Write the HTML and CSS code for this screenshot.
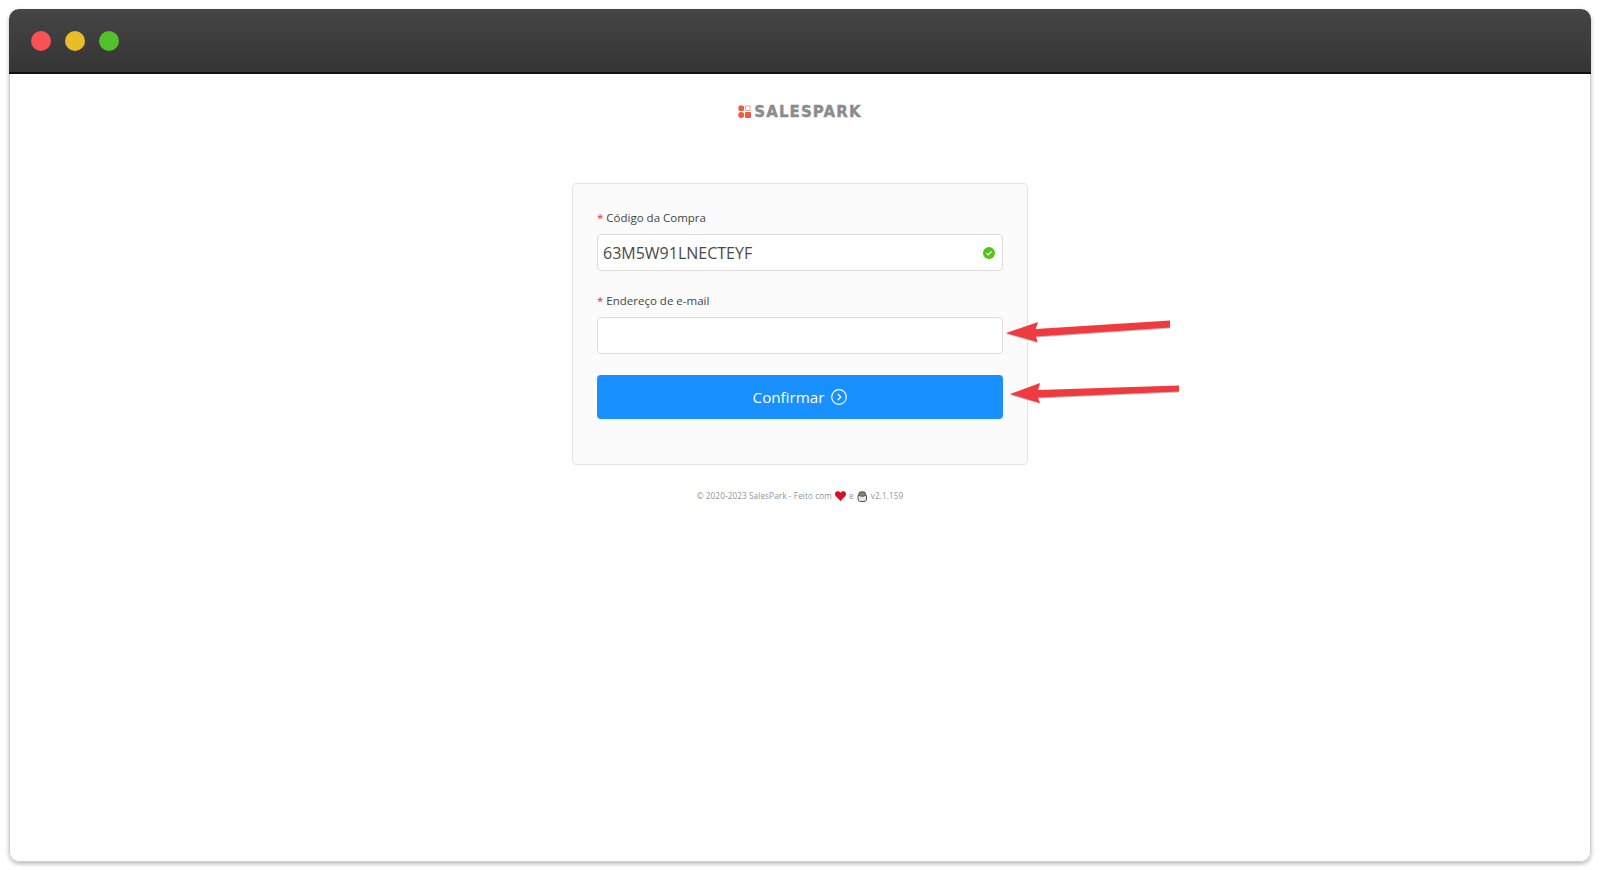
FILE: index.html
```html
<!DOCTYPE html>
<html lang="pt">
<head>
<meta charset="utf-8">
<title>SalesPark</title>
<link rel="stylesheet" href="styles.css">
</head>
<body>
<div class="window">
  <header class="titlebar">
    <span class="dot dot-red"></span>
    <span class="dot dot-yellow"></span>
    <span class="dot dot-green"></span>
  </header>
  <main class="content">
    <div class="logo">
      <svg class="logo-mark" width="13" height="13" viewBox="0 0 13 13">
        <rect x="0.5" y="0.5" width="5.5" height="5.5" rx="1.5" fill="#ee5a3c"/>
        <rect x="7.5" y="1" width="4.5" height="4.5" fill="none" stroke="#f0a898" stroke-width="1"/>
        <circle cx="3.2" cy="10" r="3" fill="#ee5a3c"/>
        <rect x="7" y="7" width="6" height="6" rx="1" fill="#ee5a3c"/>
      </svg>
      <span class="logo-text">SALESPARK</span>
    </div>
    <form class="card">
      <div class="field">
        <label class="label"><span class="req">*</span>Código da Compra</label>
        <div class="input has-value">
          <span>63M5W91LNECTEYF</span>
          <svg class="check" width="12" height="12" viewBox="0 0 12 12">
            <circle cx="6" cy="6" r="6" fill="#52c41a"/>
            <path d="M3.5 6.2 5.2 7.9 8.6 4.4" fill="none" stroke="#fff" stroke-width="1.3"/>
          </svg>
        </div>
      </div>
      <div class="field">
        <label class="label"><span class="req">*</span>Endereço de e-mail</label>
        <div class="input"></div>
      </div>
      <button class="submit" type="button">
        <span>Confirmar</span>
        <svg width="16" height="16" viewBox="0 0 16 16">
          <circle cx="8" cy="8" r="7.3" fill="none" stroke="#fff" stroke-width="1.2"/>
          <path d="M6.8 5 9.8 8 6.8 11" fill="none" stroke="#fff" stroke-width="1.2"/>
        </svg>
      </button>
    </form>
    <footer class="foot">
      <span>© 2020-2023 SalesPark - Feito com</span>
      <svg width="11" height="10" viewBox="0 0 11 10"><path d="M5.500 10 .6 5C-.6 3.400 0 .8 2.200.3 3.600 0 4.800.6 5.500 1.800 6.200.6 7.400 0 8.800.3 11 .8 11.600 3.400 10.400 5Z" fill="#d5121f"/></svg>
      <span>e</span>
      <svg width="11" height="11" viewBox="0 0 11 11"><path d="M1 4.500h8.500V8a2.500 2.500 0 0 1-2.500 2.500H3.500A2.500 2.500 0 0 1 1 8Z" fill="#e9e9e4" stroke="#555" stroke-width="1"/><ellipse cx="5.200" cy="3" rx="3.600" ry="2.400" fill="#8b7d6c" stroke="#555" stroke-width=".8"/></svg>
      <span>v2.1.159</span>
    </footer>
  </main>
</div>
<svg class="arrows" width="1600" height="870" viewBox="0 0 1600 870">
  <path d="M1006 333 1038 322 1035.500 329 1170 320.500 1170 327.500 1036 336.500 1037.500 342Z" fill="#ef3b3f"/>
  <path d="M1010 394 1040 383 1038 390 1179 385.500 1179 391.500 1038 397.500 1040 403Z" fill="#ef3b3f"/>
</svg>
</body>
</html>
```
FILE: styles.css
```css
* {
  box-sizing: border-box;
}

html,
body {
  margin: 0;
  height: 870px;
  overflow: hidden;
  background: #fff;
}

body {
  padding: 9px 9px 8px;
  font-family: "Open Sans", "Noto Sans", sans-serif;
  color: #444;
}

.window {
  height: 100%;
  display: flex;
  flex-direction: column;
  border-radius: 10px;
  overflow: hidden;
  box-shadow: 0 2px 4px rgba(0, 0, 0, 0.28);
}

.titlebar {
  flex: none;
  height: 65px;
  padding-left: 22px;
  display: flex;
  align-items: center;
  gap: 14px;
  background: linear-gradient(#454545, #353535);
  border-bottom: 2px solid #111;
}

.dot {
  width: 20px;
  height: 20px;
  border-radius: 50%;
}

.dot-red {
  background: #fa5252;
}

.dot-yellow {
  background: #e9bd27;
}

.dot-green {
  background: #51c22c;
}

.content {
  flex: 1;
  background: #fff;
  border: 1px solid #cfcfcf;
  border-top: 0;
  border-radius: 0 0 10px 10px;
  display: flex;
  flex-direction: column;
  align-items: center;
}

.logo {
  margin-top: 28px;
  height: 18px;
  display: flex;
  align-items: center;
  gap: 3px;
}

.logo-text {
  padding-top: 1px;
  font-family: "DejaVu Sans", sans-serif;
  font-weight: 700;
  font-size: 15px;
  line-height: 18px;
  letter-spacing: 1.1px;
  color: #8c8c8c;
  -webkit-text-stroke: 0.4px #8c8c8c;
}

.card {
  width: 456px;
  height: 282px;
  margin-top: 63px;
  padding: 24px;
  display: flex;
  flex-direction: column;
  background: #fbfbfb;
  border: 1px solid #e3e3e3;
  border-radius: 4px;
}

.field {
  margin-bottom: 20px;
}

.label {
  display: block;
  height: 26px;
  font-size: 11.5px;
  line-height: 20px;
  color: #454545;
}

.req {
  margin-right: 3px;
  color: #f5222d;
}

.input {
  height: 37px;
  padding: 0 6px 0 5px;
  display: flex;
  align-items: center;
  justify-content: space-between;
  background: #fff;
  border: 1px solid #dcdcdc;
  border-radius: 4px;
  font-size: 16px;
  font-weight: 500;
  color: #4a4a4a;
}

.check {
  margin-right: 1px;
}

.submit {
  height: 44px;
  margin-top: 1px;
  display: flex;
  align-items: center;
  justify-content: center;
  gap: 7px;
  background: #1890ff;
  border: 0;
  border-radius: 4px;
  color: #fff;
  font-family: inherit;
  font-size: 15.2px;
}

.foot {
  margin-top: 24px;
  display: flex;
  align-items: center;
  gap: 3px;
  font-size: 8.2px;
  line-height: 14px;
  letter-spacing: 0.1px;
  color: #959595;
}

.arrows {
  position: absolute;
  left: 0;
  top: 0;
  pointer-events: none;
  filter: drop-shadow(0 1px 0 rgba(0, 0, 0, 0.25));
}
```
